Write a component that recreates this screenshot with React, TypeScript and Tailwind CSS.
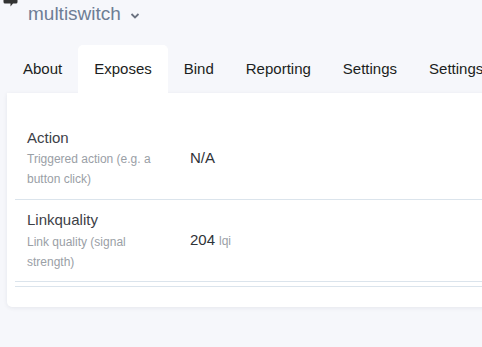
import React from "react";

interface ExposeRow {
  name: string;
  description: string;
  value: string;
  unit?: string;
}

const tabs = ["About", "Exposes", "Bind", "Reporting", "Settings", "Settings (specific)"];

const rows: ExposeRow[] = [
  { name: "Action", description: "Triggered action (e.g. a button click)", value: "N/A" },
  { name: "Linkquality", description: "Link quality (signal strength)", value: "204", unit: "lqi" },
];

function ChatTail() {
  return (
    <svg width="16" height="8" viewBox="0 0 16 8" className="absolute left-[2px] top-0">
      <path d="M3 -6 H14 A1.5 1.5 0 0 1 15.5 -4.5 V2 A1.5 1.5 0 0 1 14 3.5 H11 L8.5 6.5 V3.5 H3 A1.5 1.5 0 0 1 1.5 2 V-4.5 Z" fill="#333" />
    </svg>
  );
}

export default function App() {
  const [tab, setTab] = React.useState<number>(1);

  return (
    <div
      className="relative w-[482px] h-[347px] overflow-hidden bg-[#f6f7fb]"
      style={{ fontFamily: '"Liberation Sans", Arial, sans-serif' }}
    >
      <ChatTail />
      <div className="h-[45px] pl-[28px] pt-[2px] flex items-start">
        <span className="text-[19px] leading-6 text-[#6e7d95]">multiswitch</span>
        <svg width="10" height="10" viewBox="0 0 10 10" className="ml-[9px] mt-[9px]">
          <path d="M1.5 3 L5 6.5 L8.5 3" fill="none" stroke="#6b7280" strokeWidth="1.8" />
        </svg>
      </div>

      <div className="ml-[7px] w-[620px]">
        <div className="flex">
          {tabs.map((t, i) => (
            <button
              key={t}
              type="button"
              onClick={() => setTab(i)}
              className={
                i === tab
                  ? "px-4 py-3 text-[15px] leading-6 text-[#1b1e21] bg-white rounded-t-[5px] whitespace-nowrap"
                  : "px-4 py-3 text-[15px] leading-6 text-[#1b1e21] whitespace-nowrap"
              }
            >
              {t}
            </button>
          ))}
        </div>

        <div className="bg-white rounded-[5px] rounded-tl-none shadow-[0_1px_4px_rgba(30,40,70,0.08)] pt-6 pb-5 px-2">
          {rows.map((row) => (
            <div key={row.name} className="flex items-center border-b border-[#dbe4ec] py-[9.5px] pl-3">
              <div className="w-[163px] shrink-0 pr-5">
                <div className="text-[15px] leading-[22.5px] text-[#3d4147]">{row.name}</div>
                <div className="text-[12px] leading-5 text-[#9aa0a6]">{row.description}</div>
              </div>
              <div className="text-[15px] leading-[22.5px] text-[#2f3338]">
                {row.value}
                {row.unit && <span className="ml-1 text-[12px] text-[#9aa0a6]">{row.unit}</span>}
              </div>
            </div>
          ))}
          <div className="mt-1 border-t border-[#dbe4ec]" />
        </div>
      </div>
    </div>
  );
}
